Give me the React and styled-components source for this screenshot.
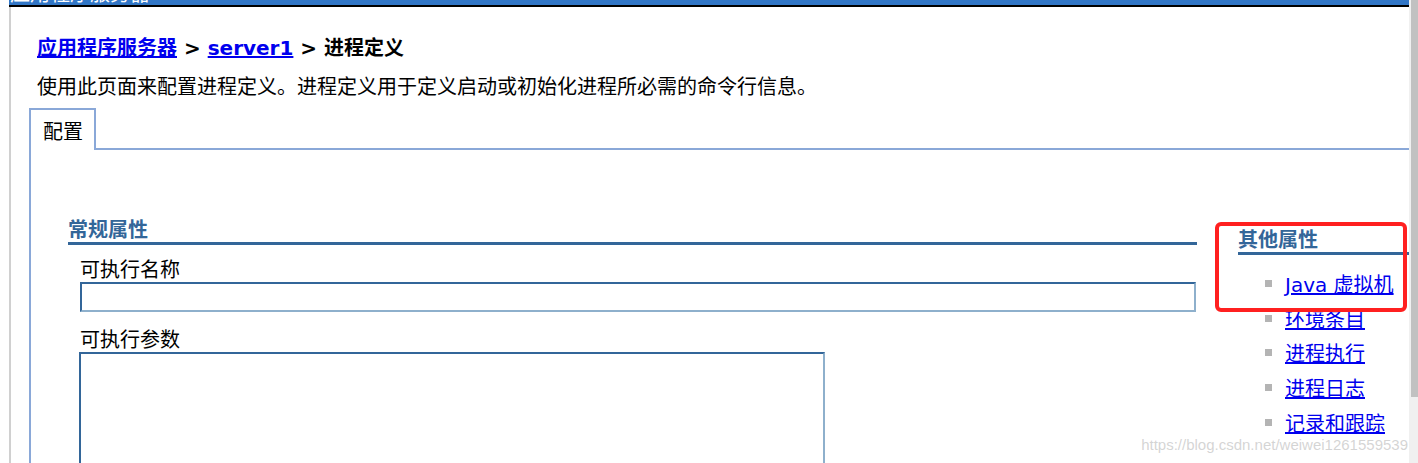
import React from 'react';
import styled, { createGlobalStyle } from 'styled-components';

const GlobalStyle = createGlobalStyle`
  html, body {
    margin: 0;
    padding: 0;
    background: #ffffff;
  }
  body {
    font-family: "DejaVu Sans", "Noto Sans CJK SC", sans-serif;
    font-size: 20px;
    color: #000;
  }
`;

const Screen = styled.div`
  display: flex;
  height: 463px;
  overflow: hidden;
  position: relative;
`;

const Frame = styled.div`
  flex: 1;
  min-height: 0;
  margin-left: 9px;
  display: flex;
  flex-direction: column;
  border-left: 2px solid #d0d0d0;

  & > * {
    flex-shrink: 0;
  }
`;

const TitleBar = styled.div`
  height: 5px;
  overflow: hidden;
  background: #3176c6;
  border-bottom: 2px solid #000;
  margin-left: -2px;
  padding-left: 1px;

  span {
    display: block;
    padding-top: 1px;
    margin-top: -17px;
    line-height: 20px;
    color: #fff;
    font-size: 20px;
  }
`;

const Content = styled.div`
  padding-left: 18px;
  display: flex;
  flex-direction: column;

  & > * {
    flex-shrink: 0;
  }
`;

const Header = styled.div`
  padding-left: 8px;
`;

const Crumbs = styled.div`
  margin-top: 29px;
  line-height: 24px;
  font-weight: bold;

  a {
    color: #0000ee;
    text-decoration: underline;
  }
`;

const Description = styled.p`
  margin: 15px 0 0;
  line-height: 24px;
`;

const TabRow = styled.div`
  display: flex;
  margin-top: 9px;
`;

const Tab = styled.div`
  width: 51px;
  height: 30px;
  padding: 10px 0 0 12px;
  line-height: 24px;
  border: 2px solid #8aa8d8;
  border-bottom: none;
`;

const TabFill = styled.div`
  flex: 1;
  border-bottom: 2px solid #8aa8d8;
`;

const Panel = styled.div`
  border-left: 2px solid #8aa8d8;
  padding: 68px 0 0 37px;
  display: flex;
  gap: 41px;
`;

const MainCol = styled.div`
  width: 1129px;
  display: flex;
  flex-direction: column;
`;

const SideCol = styled.div`
  flex: 1;
  position: relative;
  padding-top: 10px;
`;

const SectionTitle = styled.h3`
  margin: 0;
  font-size: 20px;
  line-height: 24px;
  font-weight: bold;
  color: #336699;
  border-bottom: 3px solid #336699;
`;

const FieldLabel = styled.label`
  display: block;
  margin: ${p => p.$gap}px 0 0 12px;
  line-height: 24px;
`;

const TextBox = styled.input`
  box-sizing: border-box;
  margin-left: 12px;
  width: 1116px;
  height: 30px;
  border: 2px solid #8eb0cc;
  border-top-color: #336699;
  border-left-color: #336699;
  outline: none;
  padding: 0;
`;

const TextArea = styled.textarea`
  box-sizing: border-box;
  margin-left: 11px;
  width: 746px;
  height: 150px;
  border: 2px solid #8eb0cc;
  border-top-color: #336699;
  border-left-color: #336699;
  resize: none;
  outline: none;
`;

const LinkList = styled.ul`
  list-style: none;
  margin: 11px 0 0;
  padding: 0 0 0 27px;
`;

const LinkItem = styled.li`
  height: 34.75px;
  display: flex;
  align-items: center;
  gap: 13px;

  &::before {
    content: "";
    width: 7px;
    height: 7px;
    background: #b4b4b4;
  }

  a {
    color: #0000ee;
    text-decoration: underline;
  }
`;

const Highlight = styled.div`
  position: absolute;
  left: -23px;
  top: 4px;
  width: 192px;
  height: 90px;
  box-sizing: border-box;
  border: 4px solid #ff2020;
  border-radius: 6px;
  pointer-events: none;
`;

const Scrollbar = styled.div`
  width: 9px;
  background: #f0f0f0;
  display: flex;
  justify-content: flex-end;
`;

const Thumb = styled.div`
  width: 7px;
  height: 397px;
  background: #c1c1c1;
`;

const Watermark = styled.div`
  position: absolute;
  right: 10px;
  top: 435px;
  font-family: "Liberation Sans", Arial, sans-serif;
  font-size: 15px;
  line-height: 20px;
  color: rgba(170, 170, 170, 0.5);
  pointer-events: none;
`;

const otherLinks = ['Java 虚拟机', '环境条目', '进程执行', '进程日志', '记录和跟踪'];

export default function App() {
  return (
    <>
      <GlobalStyle />
      <Screen>
        <Frame>
          <TitleBar>
            <span>应用程序服务器</span>
          </TitleBar>
          <Content>
            <Header>
              <Crumbs>
                <a href="#">应用程序服务器</a> &gt; <a href="#">server1</a> &gt; 进程定义
              </Crumbs>
              <Description>
                使用此页面来配置进程定义。进程定义用于定义启动或初始化进程所必需的命令行信息。
              </Description>
            </Header>
            <TabRow>
              <Tab>配置</Tab>
              <TabFill />
            </TabRow>
            <Panel>
              <MainCol>
                <SectionTitle>常规属性</SectionTitle>
                <FieldLabel $gap={13}>可执行名称</FieldLabel>
                <TextBox type="text" />
                <FieldLabel $gap={16}>可执行参数</FieldLabel>
                <TextArea />
              </MainCol>
              <SideCol>
                <SectionTitle>其他属性</SectionTitle>
                <LinkList>
                  {otherLinks.map(item => (
                    <LinkItem key={item}>
                      <a href="#">{item}</a>
                    </LinkItem>
                  ))}
                </LinkList>
                <Highlight />
              </SideCol>
            </Panel>
          </Content>
        </Frame>
        <Scrollbar>
          <Thumb />
        </Scrollbar>
        <Watermark>https://blog.csdn.net/weiwei1261559539</Watermark>
      </Screen>
    </>
  );
}
